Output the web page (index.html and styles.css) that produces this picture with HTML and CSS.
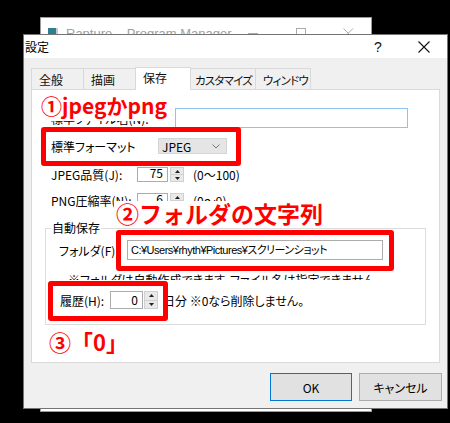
FILE: index.html
```html
<!DOCTYPE html>
<html lang="ja">
<head>
    <meta charset="UTF-8">
    <title>設定</title>
    <link rel="stylesheet" href="styles.css">
</head>
<body>
    <div class="backwin">
        <div class="back-title">
            <span class="app-icon"></span>
            <span class="back-name">Rapture – Program Manager</span>
            <svg class="back-ctl min" width="11" height="11" viewBox="0 0 11 11"><path d="M0 5.5H10" stroke="#aaa" stroke-width="1"/></svg>
            <svg class="back-ctl max" width="11" height="11" viewBox="0 0 11 11"><rect x="0.5" y="0.5" width="9" height="9" fill="none" stroke="#aaa"/></svg>
            <svg class="back-ctl cls" width="11" height="11" viewBox="0 0 11 11"><path d="M0.5 0.5L10 10M10 0.5L0.5 10" stroke="#aaa"/></svg>
        </div>
    </div>

    <div class="dialog">
        <div class="titlebar">
            <span class="title">設定</span>
            <span class="help">?</span>
            <span class="close">
                <svg width="12" height="12" viewBox="0 0 12 12"><path d="M0.5 0.5L11.5 11.5M11.5 0.5L0.5 11.5" stroke="#111" stroke-width="1.1"/></svg>
            </span>
        </div>

        <div class="tabs">
            <div class="tab tab-a">全般</div>
            <div class="tab tab-b">描画</div>
            <div class="tab tab-c active">保存</div>
            <div class="tab tab-d">カスタマイズ</div>
            <div class="tab tab-e">ウィンドウ</div>
        </div>

        <div class="panel">
            <div class="row row-name">
                <span class="lbl lbl-name">標準ファイル名(N):</span>
                <span class="field field-name"></span>
            </div>

            <div class="row row-format">
                <span class="lbl lbl-format">標準フォーマット</span>
                <span class="combo">
                    <span>JPEG</span>
                    <svg width="8" height="5" viewBox="0 0 8 5"><path d="M0.5 0.5L4 4L7.5 0.5" fill="none" stroke="#777"/></svg>
                </span>
            </div>

            <div class="row row-num">
                <span class="lbl lbl-num">JPEG品質(J):</span>
                <span class="field field-num">75</span>
                <span class="spin">
                    <span class="spin-up"><svg width="5" height="3" viewBox="0 0 5 3"><path d="M0 3L2.5 0L5 3Z" fill="#222"/></svg></span>
                    <span class="spin-down"><svg width="5" height="3" viewBox="0 0 5 3"><path d="M0 0L2.5 3L5 0Z" fill="#222"/></svg></span>
                </span>
                <span class="after">(0〜100)</span>
            </div>

            <div class="row row-num row-png">
                <span class="lbl lbl-num">PNG圧縮率(N):</span>
                <span class="field field-num">6</span>
                <span class="spin">
                    <span class="spin-up"><svg width="5" height="3" viewBox="0 0 5 3"><path d="M0 3L2.5 0L5 3Z" fill="#222"/></svg></span>
                    <span class="spin-down"><svg width="5" height="3" viewBox="0 0 5 3"><path d="M0 0L2.5 3L5 0Z" fill="#222"/></svg></span>
                </span>
                <span class="after">(0〜9)</span>
            </div>

            <fieldset class="group">
                <legend>自動保存</legend>
                <div class="row row-folder">
                    <span class="lbl lbl-folder">フォルダ(F):</span>
                    <span class="field field-folder">C:¥Users¥rhyth¥Pictures¥スクリーンショット</span>
                </div>
                <div class="hint">※フォルダは自動作成できます。ファイル名は指定できません</div>
                <div class="row row-history">
                    <span class="lbl lbl-history">履歴(H):</span>
                    <span class="field field-history">0</span>
                    <span class="spin spin-tall">
                        <span class="spin-up"><svg width="5" height="3" viewBox="0 0 5 3"><path d="M0 3L2.5 0L5 3Z" fill="#222"/></svg></span>
                        <span class="spin-down"><svg width="5" height="3" viewBox="0 0 5 3"><path d="M0 0L2.5 3L5 0Z" fill="#222"/></svg></span>
                    </span>
                    <span class="after after-history">日分 ※0なら削除しません。</span>
                </div>
            </fieldset>
        </div>

        <div class="buttons">
            <div class="btn btn-ok">OK</div>
            <div class="btn">キャンセル</div>
        </div>
    </div>

    <!-- red annotations drawn over the screenshot -->
    <div class="mark mark-1"></div>
    <div class="mark mark-2"></div>
    <div class="mark mark-3"></div>
    <div class="note note-1">①jpegかpng</div>
    <div class="note note-2">②フォルダの文字列</div>
    <div class="note note-3">③「0」</div>
</body>
</html>
```

FILE: styles.css
```css
body {
    margin: 0;
    width: 450px;
    height: 423px;
    position: relative;
    overflow: hidden;
    background-color: #000;
    color: #000;
    font-family: "Noto Sans CJK JP", "Liberation Sans", sans-serif;
    font-size: 12px;
    font-feature-settings: "palt";
}

/* window behind the dialog */
.backwin {
    position: absolute;
    left: 40px;
    top: 17px;
    width: 330px;
    height: 393px;
    background-color: #fff;
    border: 1px solid #9a9a9a;
}

.back-title {
    display: flex;
    align-items: center;
    height: 30px;
    padding-left: 7px;
}

.app-icon {
    flex: none;
    width: 10px;
    height: 11px;
    margin-right: 8px;
    background: linear-gradient(90deg, #2f7e8f 0 70%, #6a6a6a 70% 80%, #c9c9c9 80%);
}

.back-name {
    flex: none;
    width: 182px;
    overflow: hidden;
    white-space: nowrap;
    font-family: "Liberation Sans", sans-serif;
    font-size: 13px;
    color: #a0a0a0;
}

.back-ctl { flex: none; }
.back-ctl.max { margin-left: 37px; }
.back-ctl.cls { margin-left: 36px; }

/* dialog */
.dialog {
    position: absolute;
    left: 23px;
    top: 34px;
    width: 423px;
    height: 373px;
    background-color: #f0f0f0;
    border: 1px solid #747474;
}

.titlebar {
    display: flex;
    align-items: center;
    height: 23px;
    background-color: #fff;
}

.title {
    flex: 1;
    padding-left: 1px;
}

.help {
    width: 46px;
    text-align: center;
    font-family: "Liberation Sans", sans-serif;
    font-size: 14px;
    color: #111;
}

.close {
    width: 46px;
    display: flex;
    justify-content: center;
}

.tabs {
    display: flex;
    align-items: flex-end;
    height: 22px;
    margin-top: 9px;
    padding-left: 7px;
}

.tab {
    height: 21px;
    box-sizing: border-box;
    padding: 3px 0 0 7px;
    margin-right: -1px;
    background-color: #f0f0f0;
    border: 1px solid #d9d9d9;
    border-bottom: none;
    line-height: 16px;
    white-space: nowrap;
    overflow: hidden;
    color: #111;
}

.tab-a { width: 53px; }
.tab-b { width: 53px; }
.tab-c { width: 56px; }
.tab-d { width: 66px; padding-left: 4px; font-size: 11.5px; letter-spacing: -0.8px; }
.tab-e { width: 56px; font-size: 11.5px; letter-spacing: -0.8px; }

.tab.active {
    height: 23px;
    margin-bottom: -1px;
    padding-top: 2px;
    background-color: #fff;
    position: relative;
    z-index: 1;
}

.panel {
    width: 407px;
    height: 272px;
    margin-left: 7px;
    background-color: #fff;
    border: 1px solid #d9d9d9;
}

.row {
    display: flex;
    align-items: center;
    padding-left: 19px;
}

.lbl {
    white-space: nowrap;
    overflow: hidden;
    flex: none;
}

.field {
    box-sizing: border-box;
    background-color: #fff;
    border: 1px solid #acacac;
    flex: none;
}

.row-name {
    height: 20px;
    margin-top: 18px;
}

.lbl-name { width: 124px; }

.field-name {
    width: 233px;
    height: 20px;
    border-color: #8ec2ef;
}

.row-format {
    height: 16px;
    margin-top: 10px;
}

.lbl-format { width: 107px; }

.combo {
    width: 69px;
    height: 16px;
    box-sizing: border-box;
    display: flex;
    align-items: center;
    justify-content: space-between;
    padding: 0 6px 0 3px;
    background-color: #e5e5e5;
    border: 1px solid #d4d4d4;
}

.row-num {
    height: 15px;
    margin-top: 13px;
}

.row-png { margin-top: 11px; }

.lbl-num { width: 86px; }

.field-num {
    width: 31px;
    height: 15px;
    padding-right: 4px;
    text-align: right;
    line-height: 10px;
    overflow: hidden;
}

.spin {
    display: flex;
    flex-direction: column;
    width: 14px;
    height: 15px;
    margin-left: 2px;
    box-sizing: border-box;
    border: 1px solid #d0d0d0;
    background-color: #e9e9e9;
}

.spin-up, .spin-down {
    flex: 1;
    display: flex;
    align-items: center;
    justify-content: center;
}

.spin-up { border-bottom: 1px solid #d0d0d0; }

.after {
    margin-left: 9px;
    white-space: nowrap;
}

.group {
    width: 381px;
    height: 104px;
    box-sizing: border-box;
    margin: 13px 0 0 13px;
    padding: 0;
    border: 1px solid #dcdcdc;
}

.group legend {
    margin-left: 5px;
    padding: 0 1px;
    line-height: 14px;
}

.row-folder {
    height: 20px;
    margin-top: 5px;
    padding-left: 13px;
}

.lbl-folder { width: 68px; }

.field-folder {
    width: 256px;
    height: 20px;
    padding-left: 3px;
    line-height: 18px;
    font-family: "Liberation Sans", "Noto Sans CJK JP", sans-serif;
    font-size: 11px;
    letter-spacing: -0.5px;
    white-space: nowrap;
}

.hint {
    height: 8px;
    margin-top: 12px;
    padding-left: 22px;
    overflow: hidden;
    line-height: 16px;
    white-space: nowrap;
}

.row-history {
    height: 18px;
    margin-top: 11px;
    padding-left: 14px;
}

.lbl-history { width: 50px; }

.field-history {
    width: 33px;
    height: 18px;
    padding-right: 4px;
    text-align: right;
    line-height: 16px;
}

.spin-tall {
    height: 18px;
    margin-left: 1px;
}

.after-history { margin-left: 5px; }

.buttons {
    display: flex;
    justify-content: flex-end;
    gap: 7px;
    margin-top: 10px;
    padding-right: 5px;
}

.btn {
    width: 83px;
    height: 28px;
    box-sizing: border-box;
    display: flex;
    align-items: center;
    justify-content: center;
    background-color: #e1e1e1;
    border: 1px solid #adadad;
}

.btn-ok {
    width: 82px;
    border-color: #0078d7;
}

/* annotations */
.mark {
    position: absolute;
    box-sizing: border-box;
    border: 5px solid #ff0000;
    border-radius: 3px;
}

.mark-1 { left: 41px; top: 127px; width: 200px; height: 39px; }
.mark-2 { left: 116px; top: 230px; width: 278px; height: 41px; }
.mark-3 { left: 48px; top: 281px; width: 120px; height: 40px; }

.note {
    position: absolute;
    color: #ff0000;
    font-weight: bold;
    white-space: nowrap;
    font-feature-settings: normal;
}

.note-1 {
    left: 41px;
    top: 93px;
    height: 28px;
    padding-right: 6px;
    background-color: #fff;
    font-size: 21px;
    line-height: 24px;
}

.note-2 {
    left: 114px;
    top: 201px;
    height: 24px;
    padding: 0 2px;
    background-color: #fff;
    font-size: 23px;
    line-height: 24px;
}

.note-3 {
    left: 49px;
    top: 328px;
    font-size: 22px;
    line-height: 26px;
}
```
